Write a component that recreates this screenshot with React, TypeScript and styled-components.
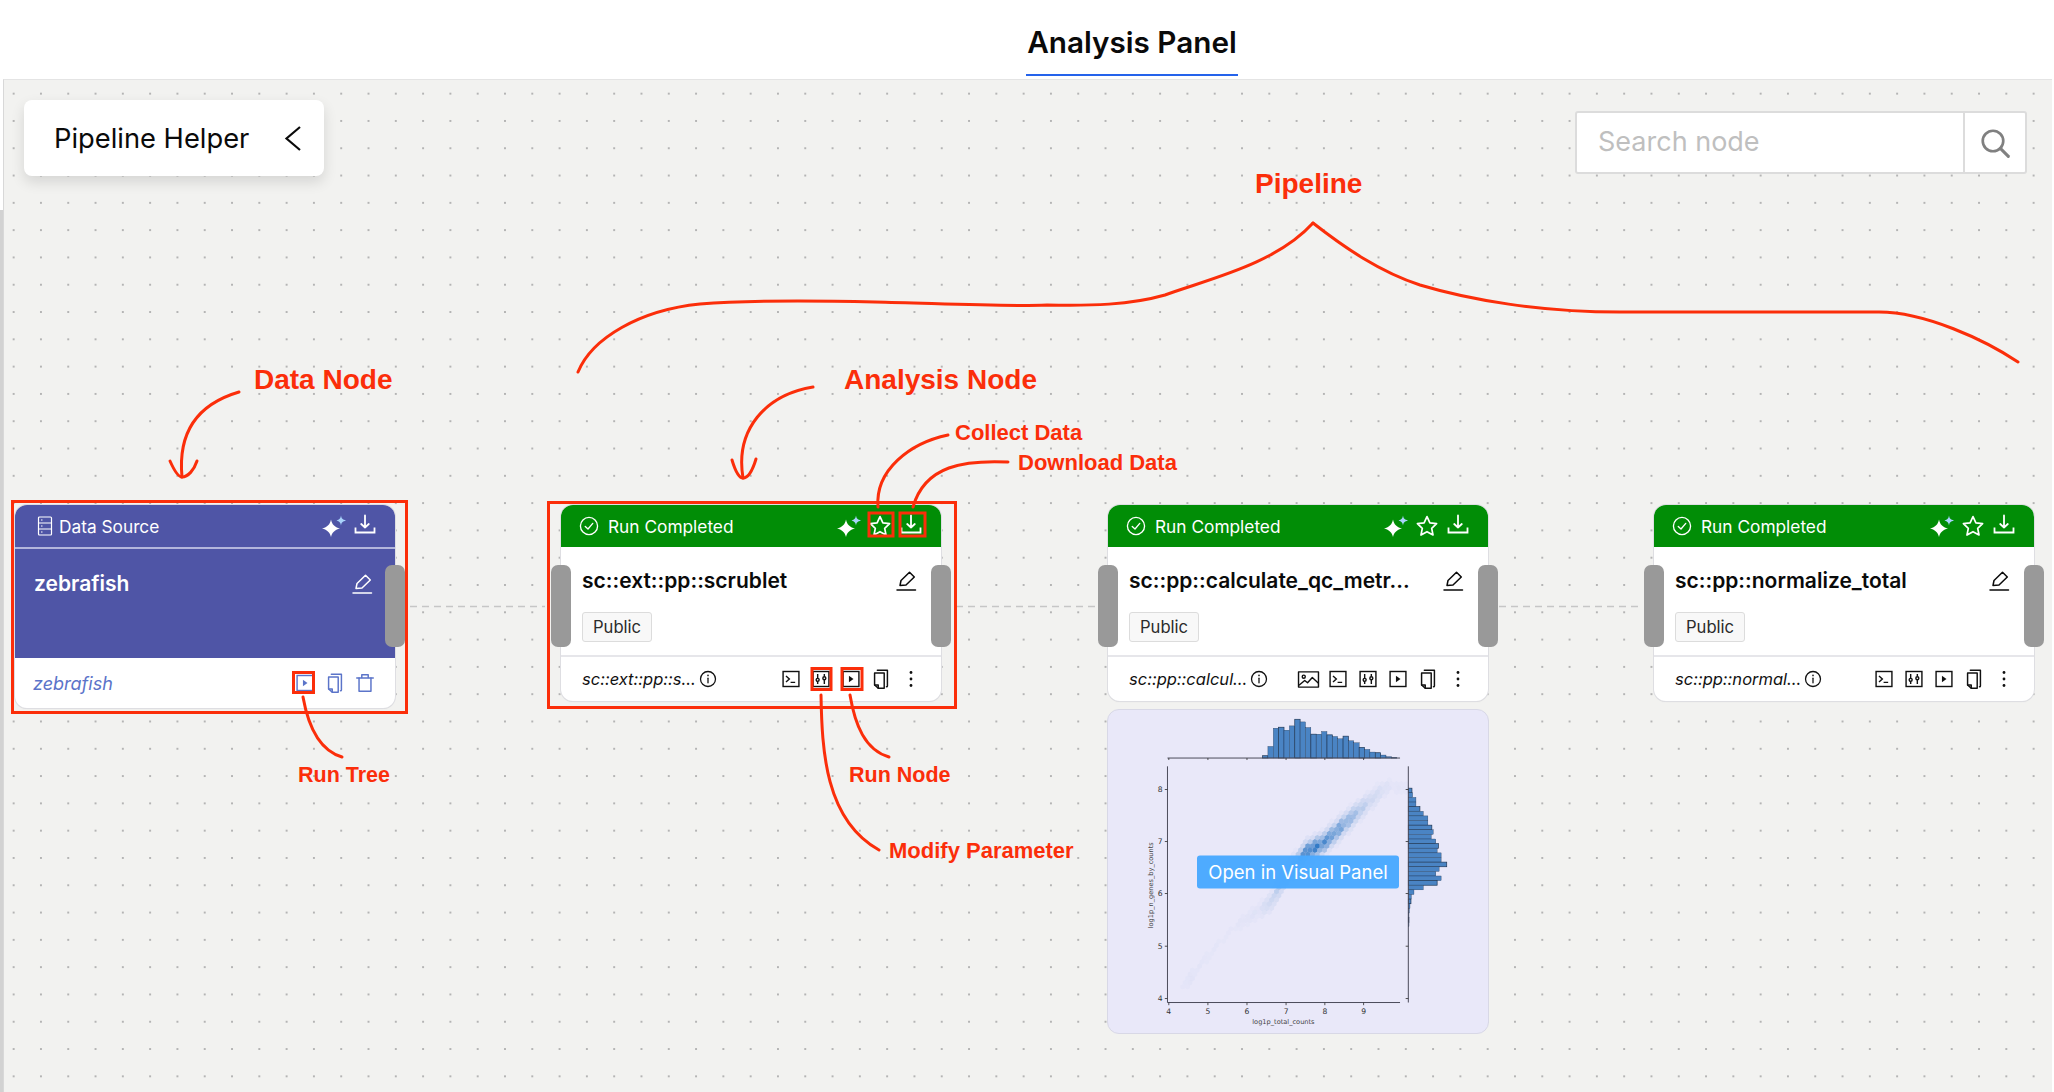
import React from "react";
import styled, { createGlobalStyle } from "styled-components";

const RED = "#fb2e0a";
const SANS = `Inter, "Liberation Sans", sans-serif`;

const Global = createGlobalStyle`
  html, body { margin: 0; padding: 0; background: #fff; }
  body { width: 2054px; height: 1092px; overflow: hidden; font-family: ${SANS}; }
  * { box-sizing: border-box; }
`;

const Page = styled.div`
  width: 2054px;
  height: 1092px;
  display: flex;
  flex-direction: column;
`;
const TopBar = styled.header`
  height: 79px;
  display: flex;
  justify-content: center;
  padding-left: 210px;
`;
const Tab = styled.div`
  height: 76px;
  padding: 23px 1px 0;
  font-size: 29.7px;
  line-height: 38px;
  font-weight: 600;
  color: #0a0a0a;
  border-bottom: 2px solid #2563eb;
`;
const Stage = styled.div`
  flex: 1;
  display: flex;
`;
const LeftRail = styled.div`
  width: 3px;
  background: linear-gradient(#fff 131px, #d2d2d2 131px);
`;
const RightRail = styled.div`
  width: 2px;
  background: #fff;
`;
const Canvas = styled.main`
  flex: 1;
  position: relative;
  overflow: hidden;
  background-color: #f2f2f0;
  background-image: radial-gradient(circle at center, #b4b4b4 0.7px, transparent 1px);
  background-size: 27.3px 27.3px;
  background-position: -4px 0;
  border-top: 1px solid #e4e4e4;
  border-left: 1px solid #d8d8d8;
`;
const HelperCard = styled.div`
  position: absolute;
  left: 20px;
  top: 20px;
  width: 300px;
  height: 76px;
  display: flex;
  align-items: center;
  justify-content: space-between;
  padding: 0 22px 0 30px;
  background: #fff;
  border-radius: 8px;
  box-shadow: 0 6px 14px rgba(0, 0, 0, 0.12);
  font-size: 27.3px;
  color: #0a0a0a;
`;
const SearchBox = styled.div`
  position: absolute;
  left: 1571px;
  top: 31px;
  width: 452px;
  height: 63px;
  display: flex;
  background: #fff;
  border: 2px solid #dcdcdc;
  border-radius: 3px;
`;
const SearchText = styled.div`
  flex: 1;
  display: flex;
  align-items: center;
  padding: 0 0 2px 21px;
  font-size: 27px;
  color: #bfbfbf;
`;
const SearchBtn = styled.div`
  width: 62px;
  display: flex;
  align-items: center;
  justify-content: center;
  border-left: 2px solid #dcdcdc;
  color: #808080;
`;
const NodeBox = styled.section<{ $x: number; $h: number }>`
  position: absolute;
  left: ${(p) => p.$x - 4}px;
  top: 425px;
  width: 380px;
  height: ${(p) => p.$h}px;
  display: flex;
  flex-direction: column;
  background: #fff;
  border-radius: 12px;
  box-shadow: 0 0 0 1px #dedee2, 0 1px 1px #d8d8d8;
`;
const NodeHead = styled.div<{ $bg: string }>`
  height: 42px;
  flex: none;
  display: flex;
  align-items: center;
  padding: 0 18px;
  gap: 9px;
  background: ${(p) => p.$bg};
  color: #fff;
  border-radius: 12px 12px 0 0;
  font-size: 17.3px;
`;
const HeadLabel = styled.span`
  flex: 1;
  white-space: nowrap;
`;
const HeadIcons = styled.div`
  display: flex;
  gap: 7px;
`;
const Slot = styled.span<{ $color?: string }>`
  width: 24px;
  height: 24px;
  display: flex;
  align-items: center;
  justify-content: center;
  color: ${(p) => p.$color ?? "inherit"};
`;
const NodeBody = styled.div<{ $bg: string; $h: number; $line?: boolean }>`
  height: ${(p) => p.$h}px;
  flex: none;
  padding: ${(p) => (p.$line ? "21px 21px 0 19px" : "20px 23px 0 21px")};
  background: ${(p) => p.$bg};
  border-top: ${(p) => (p.$line ? "2px solid #b3b6dc" : "0")};
  border-bottom: ${(p) => (p.$line ? "0" : "2px solid #e6e6ea")};
  color: ${(p) => (p.$line ? "#fff" : "#0a0a0a")};
`;
const TitleRow = styled.div`
  display: flex;
  align-items: center;
  justify-content: space-between;
  height: 28px;
`;
const NodeTitle = styled.h3`
  margin: 0;
  font-size: 21px;
  font-weight: 600;
  line-height: 28px;
  white-space: nowrap;
`;
const PublicTag = styled.span`
  display: inline-flex;
  align-items: center;
  margin-top: 17px;
  height: 30px;
  padding: 0 10px;
  font-size: 16.6px;
  color: #2c2c2c;
  background: #f8f8f8;
  border: 1px solid #dcdcdc;
  border-radius: 3px;
`;
const NodeFoot = styled.div<{ $color?: string }>`
  flex: 1;
  display: flex;
  align-items: center;
  padding: 0 18px 0 21px;
  color: ${(p) => p.$color ?? "#111"};
`;
const FootName = styled.span`
  font-size: 16.5px;
  font-style: italic;
  white-space: nowrap;
`;
const FootInfo = styled.span`
  display: flex;
  margin-left: 3px;
`;
const FootIcons = styled.div`
  margin-left: auto;
  display: flex;
  gap: 6px;
`;
const Handle = styled.span<{ $side: "left" | "right" }>`
  position: absolute;
  ${(p) => p.$side}: -10px;
  top: 60px;
  width: 20px;
  height: 82px;
  background: #999;
  border-radius: 7px;
`;
const PlotCard = styled.figure`
  position: absolute;
  left: 1103px;
  top: 629px;
  width: 382px;
  height: 325px;
  margin: 0;
  background: #e9e8f9;
  border: 1px solid #d8d8e6;
  border-radius: 12px;
`;
const OpenButton = styled.span`
  position: absolute;
  left: 50%;
  top: 50%;
  transform: translate(-50%, -50%);
  width: 202px;
  height: 33px;
  display: flex;
  align-items: center;
  justify-content: center;
  background: rgba(72, 168, 255, 0.97);
  color: #fff;
  font-size: 18.5px;
  border-radius: 3px;
  white-space: nowrap;
`;
const Layer = styled.svg`
  position: absolute;
  left: 0;
  top: 0;
  width: 2049px;
  height: 1013px;
  pointer-events: none;
`;
const Note = styled.span<{ $x: number; $y: number; $size: number }>`
  position: absolute;
  left: ${(p) => p.$x - 4}px;
  top: ${(p) => p.$y - 80}px;
  font-family: "Liberation Sans", Arial, sans-serif;
  font-weight: 700;
  font-size: ${(p) => p.$size}px;
  line-height: 1;
  color: ${RED};
  white-space: nowrap;
`;
const PlotSvg = styled.svg`
  display: block;
  width: 100%;
  height: 100%;
  border-radius: 12px;
`;

const base = (s: number, w = 1.6) => ({
  width: s,
  height: s,
  viewBox: "0 0 24 24",
  fill: "none",
  stroke: "currentColor",
  strokeWidth: w,
  strokeLinecap: "round" as const,
  strokeLinejoin: "round" as const,
});

const Sparkle = () => (
  <svg width="24" height="24" viewBox="0 0 24 24">
    <path d="M9 5.5 C10 10.5 12.5 13 18 14.5 C12.5 16 10 18.5 9 23 C8 18.5 5.5 16 0 14.5 C5.5 13 8 10.5 9 5.5Z" fill="#fff" />
    <path d="M19 1.5 C19.5 4.5 20.5 5.5 24 6.5 C20.5 7.5 19.5 8.5 19 11.5 C18.5 8.5 17.5 7.5 14.5 6.5 C17.5 5.5 18.5 4.5 19 1.5Z" fill="#a9d3fb" />
  </svg>
);
const Star = () => (
  <svg {...base(24, 1.7)}>
    <path d="M12 2.6 L14.9 8.8 L21.6 9.7 L16.7 14.3 L18 21 L12 17.7 L6 21 L7.3 14.3 L2.4 9.7 L9.1 8.8Z" />
  </svg>
);
const Download = () => (
  <svg {...base(24, 1.8)}>
    <path d="M12 1.5 V13.5 M8.2 10 L12 13.5 L15.8 10" />
    <path d="M2.5 13.5 V18.5 H21.5 V13.5" strokeLinecap="butt" strokeLinejoin="miter" />
  </svg>
);
const ServerIcon = () => (
  <svg width="18" height="20" viewBox="0 0 18 20" fill="none" stroke="currentColor" strokeWidth="1.2">
    <rect x="2.5" y="1" width="13" height="18" rx="1" />
    <path d="M2.5 7 H15.5 M2.5 13 H15.5" />
    <path d="M5 4 H6.5 M5 10 H6.5 M5 16 H6.5" />
  </svg>
);
const CircleCheck = () => (
  <svg {...base(20, 1.6)}>
    <circle cx="12" cy="12" r="10.3" />
    <path d="M7.5 12.5 L10.8 15.6 L16.5 8.8" />
  </svg>
);
const Info = () => (
  <svg {...base(18, 1.7)}>
    <circle cx="12" cy="12" r="10" />
    <path d="M12 11 V17" />
    <path d="M12 7.2 V7.4" strokeWidth="2.2" />
  </svg>
);
const Pencil = () => (
  <svg {...base(26, 1.5)}>
    <path d="M6 16.5 L7 11.5 L15.5 3.2 L20.3 8 L12 16 L6 16.5Z" />
    <path d="M3 21 H21.5" />
  </svg>
);
const Terminal = () => (
  <svg {...base(20, 1.7)} strokeLinecap="butt" strokeLinejoin="miter">
    <rect x="2.5" y="3" width="19" height="18" />
    <path d="M6 8.5 L10 12 L6 15.5 M11.5 16 H17" />
  </svg>
);
const Sliders = () => (
  <svg {...base(20, 1.7)} strokeLinecap="butt" strokeLinejoin="miter">
    <rect x="2.5" y="3" width="19" height="18" />
    <path d="M8 6 V11 M8 15 V18 M16 6 V9 M16 13 V18" />
    <circle cx="8" cy="13" r="1.8" />
    <circle cx="16" cy="11" r="1.8" />
  </svg>
);
const PlayBox = () => (
  <svg {...base(20, 1.7)} strokeLinecap="butt" strokeLinejoin="miter">
    <rect x="2.5" y="3" width="19" height="18" />
    <path d="M9.5 8 L15 12 L9.5 16Z" fill="currentColor" stroke="none" />
  </svg>
);
const ImageIcon = () => (
  <svg {...base(20, 1.5)} viewBox="0 0 24 20" width="23" height="19" strokeLinecap="butt">
    <rect x="1.5" y="2" width="21" height="16" />
    <circle cx="7" cy="7" r="1.6" />
    <path d="M2 16 L8 11 L11 13.5 L16 8 L22.5 14" />
  </svg>
);
const Copy = () => (
  <svg {...base(22, 1.6)}>
    <path d="M8 2.5 H19 V19.5 Q19 20.5 18 20.5" />
    <path d="M5 5.5 H15.5 V22 H9 L5 18.5Z" />
    <path d="M5 18.5 H9 V22" />
  </svg>
);
const Dots = () => (
  <svg width="20" height="20" viewBox="0 0 20 20" fill="currentColor">
    <circle cx="10" cy="3.5" r="1.4" />
    <circle cx="10" cy="10" r="1.4" />
    <circle cx="10" cy="16.5" r="1.4" />
  </svg>
);
const Trash = () => (
  <svg {...base(22, 1.6)}>
    <path d="M3 6.5 H21" />
    <path d="M8.5 6 V3 H15.5 V6" />
    <path d="M5.5 6.5 V21 H18.5 V6.5" />
  </svg>
);
const Chevron = () => (
  <svg width="18" height="27" viewBox="0 0 18 27" fill="none" stroke="#0a0a0a" strokeWidth="2.2">
    <path d="M16 2 L2.5 13.5 L16 25" />
  </svg>
);
const Search = () => (
  <svg {...base(32, 2)}>
    <circle cx="10.5" cy="10.5" r="7.7" />
    <path d="M16 16 L22 22" strokeWidth="2.3" />
  </svg>
);

const GREEN = "#018d06";
const PURPLE = "#4f55a6";

type NodeSpec = { x: number; title: string; foot: string; image?: boolean };
const nodes: NodeSpec[] = [
  { x: 561, title: "sc::ext::pp::scrublet", foot: "sc::ext::pp::s..." },
  { x: 1108, title: "sc::pp::calculate_qc_metr...", foot: "sc::pp::calcul...", image: true },
  { x: 1654, title: "sc::pp::normalize_total", foot: "sc::pp::normal..." },
];

const AnalysisNode = ({ x, title, foot, image }: NodeSpec) => (
  <NodeBox $x={x} $h={196}>
    <NodeHead $bg={GREEN}>
      <CircleCheck />
      <HeadLabel>Run Completed</HeadLabel>
      <HeadIcons>
        <Slot><Sparkle /></Slot>
        <Slot><Star /></Slot>
        <Slot><Download /></Slot>
      </HeadIcons>
    </NodeHead>
    <NodeBody $bg="#fff" $h={110}>
      <TitleRow>
        <NodeTitle>{title}</NodeTitle>
        <Slot><Pencil /></Slot>
      </TitleRow>
      <PublicTag>Public</PublicTag>
    </NodeBody>
    <NodeFoot>
      <FootName>{foot}</FootName>
      <FootInfo><Info /></FootInfo>
      <FootIcons>
        {image && <Slot><ImageIcon /></Slot>}
        <Slot><Terminal /></Slot>
        <Slot><Sliders /></Slot>
        <Slot><PlayBox /></Slot>
        <Slot><Copy /></Slot>
        <Slot><Dots /></Slot>
      </FootIcons>
    </NodeFoot>
    <Handle $side="left" />
    <Handle $side="right" />
  </NodeBox>
);

const DataHeadLabel = styled.div`
  flex: 1;
  display: flex;
  align-items: center;
  gap: 5px;
  padding-left: 3px;
`;
const DataFootName = styled(FootName)`
  font-size: 18px;
  margin-left: -3px;
`;

const DataNode = () => (
  <NodeBox $x={15} $h={203}>
    <NodeHead $bg={PURPLE}>
      <DataHeadLabel>
        <ServerIcon />
        <span>Data Source</span>
      </DataHeadLabel>
      <HeadIcons>
        <Slot><Sparkle /></Slot>
        <Slot><Download /></Slot>
      </HeadIcons>
    </NodeHead>
    <NodeBody $bg={PURPLE} $h={111} $line>
      <TitleRow>
        <NodeTitle>zebrafish</NodeTitle>
        <Slot><Pencil /></Slot>
      </TitleRow>
    </NodeBody>
    <NodeFoot $color="#5b74c9">
      <DataFootName>zebrafish</DataFootName>
      <FootIcons>
        <Slot><PlayBox /></Slot>
        <Slot><Copy /></Slot>
        <Slot><Trash /></Slot>
      </FootIcons>
    </NodeFoot>
    <Handle $side="right" />
  </NodeBox>
);

/* plot data, in units of three to a page pixel */
const topTops = [165, 137, 82, 79, 88, 75, 55, 63, 80, 100, 100, 92, 102, 107, 114, 106, 120, 126, 140, 146, 154, 156, 163, 168, 171];
const rightEnds = [968, 970, 980, 980, 992, 1002, 1016, 1016, 1028, 1032, 1026, 1040, 1048, 1044, 1056, 1056, 1073, 1050, 1040, 1056, 1044, 1002, 974, 966, 965, 962, 960, 959, 959, 959];

const lerp = (pts: number[][], x: number) => {
  if (x <= pts[0][0]) return pts[0][1];
  for (let i = 1; i < pts.length; i++) {
    if (x <= pts[i][0]) {
      const [a, b] = pts[i - 1];
      const [c, d] = pts[i];
      return b + ((d - b) * (x - a)) / (c - a);
    }
  }
  return pts[pts.length - 1][1];
};
const centre = [[260, 880], [300, 835], [420, 690], [540, 610], [600, 510], [650, 455], [700, 430], [760, 375], [820, 320], [890, 260]];
const peak = [[260, 0.015], [300, 0.04], [340, 0.025], [420, 0.02], [510, 0.05], [560, 0.22], [620, 0.6], [655, 1], [700, 0.85], [750, 0.65], [790, 0.42], [830, 0.18], [880, 0.08], [905, 0.03]];
const hexes = () => {
  const out: { x: number; y: number; o: number }[] = [];
  const w = 14.5;
  const h = 12.5;
  for (let r = 0; r < 56; r++) {
    const y = 225 + r * h;
    for (let c = 0; c < 50; c++) {
      const x = 240 + c * w + (r % 2 ? w / 2 : 0);
      const d = (y - lerp(centre, x)) / 24;
      const noise = 0.85 + 0.15 * Math.sin(r * 12.9 + c * 78.2);
      const o = lerp(peak, x) * Math.exp(-d * d) * noise;
      if (o > 0.015) out.push({ x, y, o });
    }
  }
  return out;
};
const hexPath = (x: number, y: number) => {
  const a = 7.25;
  const b = 8.4;
  return `M${x} ${y - b}L${x + a} ${y - b / 2}L${x + a} ${y + b / 2}L${x} ${y + b}L${x - a} ${y + b / 2}L${x - a} ${y - b / 2}Z`;
};

const xTicks = [[234, "4"], [352, "5"], [470, "6"], [588, "7"], [705, "8"], [822, "9"]] as const;
const yTicks = [[267, "8"], [424, "7"], [581, "6"], [740, "5"], [898, "4"]] as const;

const Plot = () => (
  <PlotSvg viewBox="51 27 1146 975">
    {topTops.map((t, i) => (
      <rect key={i} x={517 + i * 16.2} y={t} width={16.2} height={172 - t} fill="#4a84c4" stroke="#1c3350" strokeWidth={i % 3 === 0 ? 2 : 1} />
    ))}
    {rightEnds.map((e, i) => (
      <rect key={i} x={957} y={263 + i * 13.95} width={e - 957} height={13.95} fill="#4a84c4" stroke="#1c3350" strokeWidth={i % 4 === 0 ? 2 : 1} />
    ))}
    {hexes().map((h, i) => (
      <path key={i} d={hexPath(h.x, h.y)} fill="#1f6fc0" fillOpacity={h.o} />
    ))}
    <path d="M230 172 H932 M230 197 V910 H932 M957 197 V910" stroke="#4a4a5a" strokeWidth="3" fill="none" />
    {xTicks.map(([x, l]) => (
      <g key={l}>
        <path d={`M${x} 910 V918 M${x} 172 V178`} stroke="#333" strokeWidth="2.5" />
        <text x={x} y={945} textAnchor="middle" fontSize="23" fontFamily="DejaVu Sans, sans-serif" fill="#333">{l}</text>
      </g>
    ))}
    {yTicks.map(([y, l]) => (
      <g key={l}>
        <path d={`M222 ${y} H230 M949 ${y} H957`} stroke="#333" strokeWidth="2.5" />
        <text x={208} y={y + 8} textAnchor="middle" fontSize="23" fontFamily="DejaVu Sans, sans-serif" fill="#333">{l}</text>
      </g>
    ))}
    <text x={580} y={974} textAnchor="middle" fontSize="20" fontFamily="DejaVu Sans, sans-serif" fill="#444">log1p_total_counts</text>
    <text transform="translate(185 556) rotate(-90)" textAnchor="middle" fontSize="20" fontFamily="DejaVu Sans, sans-serif" fill="#444">log1p_n_genes_by_counts</text>
  </PlotSvg>
);

const curves = [
  "M578 372 C592 338 640 310 700 304 C750 300 830 301 875 302 C930 303 1000 307 1047 305 C1090 306 1130 305 1165 295 C1205 280 1275 265 1313 223",
  "M1313 223 C1345 248 1380 272 1420 285 C1470 300 1540 312 1620 312 C1700 312 1800 312 1879 312 C1925 312 1985 340 2018 362",
  "M239 392 C195 405 178 435 182 477",
  "M170 461 C174 470 178 477 182 477 C188 477 194 470 197 461",
  "M813 387 C765 395 735 430 743 478",
  "M732 460 C735 470 739 478 743 478 C749 478 753 469 756 459",
  "M948 435 C910 443 875 470 878 507",
  "M1008 462 C965 460 925 465 913 507",
  "M303 697 C308 725 318 750 342 757",
  "M850 695 C855 725 865 750 889 757",
  "M821 695 C822 750 825 820 879 850",
];
const boxes = [
  [12.5, 501.5, 394, 211],
  [548.5, 502.5, 407, 205],
  [869, 513, 24, 23],
  [900, 513, 25, 23],
  [812, 668.5, 19, 21],
  [842, 668.5, 20, 21],
  [293.5, 672.5, 20, 20],
];
const edges = ["M410 606.5 H545", "M956 606.5 H1097", "M1499 606.5 H1643"];

const notes = [
  { x: 254, y: 366, s: 28, t: "Data Node" },
  { x: 844, y: 366, s: 28, t: "Analysis Node" },
  { x: 1255, y: 170, s: 28, t: "Pipeline" },
  { x: 955, y: 422, s: 22, t: "Collect Data" },
  { x: 1018, y: 452, s: 22, t: "Download Data" },
  { x: 298, y: 765, s: 21.5, t: "Run Tree" },
  { x: 849, y: 765, s: 21.5, t: "Run Node" },
  { x: 889, y: 840, s: 22, t: "Modify Parameter" },
];

export default function App() {
  return (
    <Page>
      <Global />
      <TopBar>
        <Tab>Analysis Panel</Tab>
      </TopBar>
      <Stage>
        <LeftRail />
        <Canvas>
          <Layer viewBox="4 80 2049 1013">
            {edges.map((d) => (
              <path key={d} d={d} stroke="#c6c6c6" strokeWidth="1.6" strokeDasharray="7 5" fill="none" />
            ))}
          </Layer>
          <HelperCard>
            <span>Pipeline Helper</span>
            <Chevron />
          </HelperCard>
          <SearchBox>
            <SearchText>Search node</SearchText>
            <SearchBtn><Search /></SearchBtn>
          </SearchBox>
          <DataNode />
          {nodes.map((n) => (
            <AnalysisNode key={n.x} {...n} />
          ))}
          <PlotCard>
            <Plot />
            <OpenButton>Open in Visual Panel</OpenButton>
          </PlotCard>
          <Layer viewBox="4 80 2049 1013">
            {curves.map((d) => (
              <path key={d} d={d} stroke={RED} strokeWidth="3" strokeLinecap="round" fill="none" />
            ))}
            {boxes.map(([x, y, w, h]) => (
              <rect key={`${x}-${y}`} x={x} y={y} width={w} height={h} stroke={RED} strokeWidth="3" fill="none" />
            ))}
          </Layer>
          {notes.map((n) => (
            <Note key={n.t} $x={n.x} $y={n.y} $size={n.s}>{n.t}</Note>
          ))}
        </Canvas>
        <RightRail />
      </Stage>
    </Page>
  );
}
